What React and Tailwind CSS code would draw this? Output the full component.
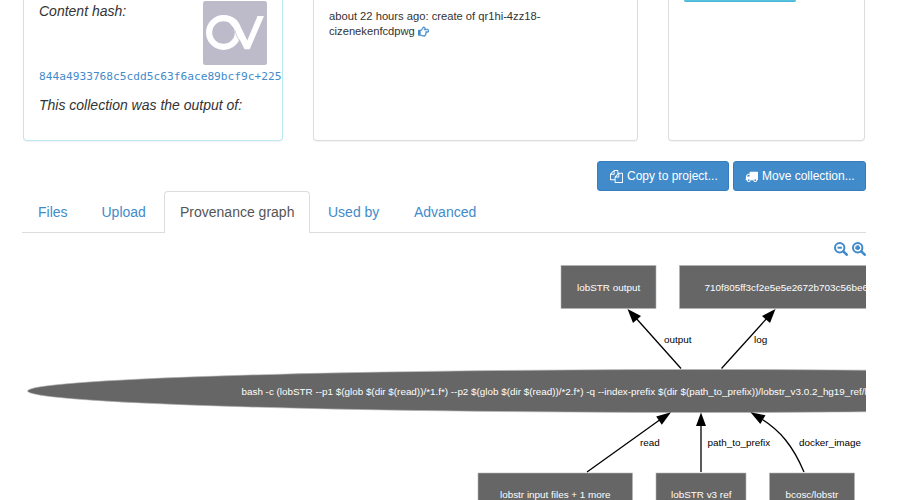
const cardBase = "h-[141px] shrink-0 rounded-b border border-t-0 shadow-[0_1px_1px_rgba(0,0,0,0.05)]";

function FaIcon({ d, className }) {
  return (
    <svg viewBox="0 0 1792 1792" fill="currentColor" className={className}>
      <path d={d} />
    </svg>
  );
}

const COPY =
  "M1696 384q40 0 68 28t28 68v1216q0 40-28 68t-68 28h-960q-40 0-68-28t-28-68v-288h-544q-40 0-68-28t-28-68v-672q0-40 20-88t48-76l408-408q28-28 76-48t88-20h416q40 0 68 28t28 68v328q68-40 128-40h416zm-544 213l-299 299h299v-299zm-640-384l-299 299h299v-299zm196 647l316-316v-416h-384v416q0 40-28 68t-68 28h-416v640h512v-256q0-40 20-88t48-76zm956 804v-1152h-384v416q0 40-28 68t-68 28h-416v640h896z";
const TRUCK =
  "M640 1408q0-52-38-90t-90-38-90 38-38 90 38 90 90 38 90-38 38-90zm-384-512h384v-256h-158q-13 0-22 9l-195 195q-9 9-9 22v30zm1280 512q0-52-38-90t-90-38-90 38-38 90 38 90 90 38 90-38 38-90zm256-1088v1024q0 15-4 26.500t-13.500 18.500-16.500 11.500-23.500 6-22.500 2-25.500 0-22.500-.5q0 106-75 181t-181 75-181-75-75-181h-384q0 106-75 181t-181 75-181-75-75-181h-64q-3 0-22.500.5t-25.500 0-22.500-2-23.500-6-16.500-11.500-13.500-18.500-4-26.500q0-26 19-45t45-19v-320q0-8-.5-35t0-38 2.500-34.500 6.500-37 14-30.500 22.500-30l198-198q19-19 50.500-32t58.500-13h160v-192q0-26 19-45t45-19h1024q26 0 45 19t19 45z";
const HAND =
  "M256 1408q0-26-19-45t-45-19-45 19-19 45 19 45 45 19 45-19 19-45zm1408-640q0-51-39-89.500t-89-38.500h-576q0-20 15-48.500t33-55 33-68 15-84.500q0-67-44.500-97.500t-115.500-30.500q-24 0-90 139-24 44-37 65-40 64-112 145-71 81-101 106-69 57-140 57h-32v640h32q72 0 167 32t193.500 64 179.500 32q189 0 189-167 0-26-5-56 30-16 47.500-52.500t17.500-73.500-18-69q53-50 53-119 0-25-10-55.500t-25-47.500h331q52 0 90-38t38-90zm128-1q0 105-75.500 181t-180.500 76h-169q-4 62-37 119 3 21 3 43 0 101-60 178 1 139-85 219.500t-227 80.500q-133 0-322-69-164-59-223-59h-288q-53 0-90.500-37.500t-37.500-90.500v-640q0-53 37.500-90.500t90.500-37.500h288q10 0 21.500-4.500t23.500-14 22.500-18 24-22.500 20.500-21.500 19-21.500 14-17q65-74 100-129 13-21 33-62t37-72 40.500-63 55-49.500 69.500-17.500q125 0 206.500 67t81.500 189q0 68-22 128h374q104 0 180 76t76 179z";

function ZoomIcon({ plus }) {
  return (
    <svg viewBox="0 0 14 14" className="size-[14px]" fill="none" stroke="currentColor">
      <circle cx="5.7" cy="5.7" r="4.7" strokeWidth="2" />
      <path d="M9.3 9.3 12.7 12.7" strokeWidth="2.6" strokeLinecap="round" />
      {plus ? <path d="M3.300 5.700h4.800M5.700 3.300v4.800" strokeWidth="2.400" /> : <path d="M3.5 5.7h4.4" strokeWidth="2" />}
    </svg>
  );
}

function Logo() {
  return (
    <svg viewBox="0 0 64 64" className="mt-px size-16 shrink-0">
      <rect width="64" height="64" rx="2.500" fill="#bdbaca" />
      <circle cx="20.500" cy="31.500" r="14.400" fill="none" stroke="#fff" strokeWidth="6.200" />
      <path d="M24 14.400C33 16 36 21 38 26.500L44.300 39.500 54.500 15H61L46.700 48.300H41.500L31.500 28 24 19Z" fill="#fff" />
      <path d="M32.200 29.500C33 34 34.500 37 36.800 40" fill="none" stroke="#bdbaca" strokeWidth="0.700" />
    </svg>
  );
}

function Button({ icon, children, className }) {
  return (
    <button className={`flex h-[30px] items-center whitespace-nowrap rounded-[3px] border border-[#357ebd] bg-[#428bca] pl-3 text-[12px] text-white ${className}`}>
      <FaIcon d={icon} className="mr-1 size-[13px]" />
      {children}
    </button>
  );
}

function Tab({ children, className }) {
  return <span className={`h-[41px] pt-[11px] leading-5 text-[#428bca] ${className}`}>{children}</span>;
}

function Graph() {
  return (
    <svg width="844" height="240" viewBox="22 260 844 240" className="block" fontSize="9.9">
      <g fill="#666" stroke="#b5b5b5" strokeWidth="0.6">
        <rect x="561" y="265.500" width="95" height="43" />
        <rect x="679.500" y="265.500" width="260" height="43" />
        <ellipse cx="701" cy="391" rx="673.500" ry="21.500" />
        <rect x="478" y="473" width="154.500" height="43" />
        <rect x="656" y="473" width="90" height="43" />
        <rect x="769.500" y="473" width="85" height="43" />
      </g>
      <g fill="none" stroke="#000" strokeWidth="1.300">
        <path d="M681 368.500 635 317" />
        <path d="M721.500 368.500 768 317" />
        <path d="M587 472 661 419" />
        <path d="M701 472V424" />
        <path d="M804 472C793 446 780 430 760 418" />
      </g>
      <g fill="#000">
        <path d="M627.500 309 641 316 633 323Z" />
        <path d="M775.500 309 770 323 762 316Z" />
        <path d="M671 412.300 661.800 424.800 656.200 416.500Z" />
        <path d="M701 412.500 706 426H696Z" />
        <path d="M750.500 412.300 765.500 415.200 760.300 424Z" />
      </g>
      <g fill="#fff">
        <text x="577" y="291">lobSTR output</text>
        <text x="704.500" y="291">710f805ff3cf2e5e5e2672b703c56be6</text>
        <text x="241.500" y="395" fontSize="9.870">{"bash -c (lobSTR --p1 $(glob $(dir $(read))/*1.f*) --p2 $(glob $(dir $(read))/*2.f*) -q --index-prefix $(dir $(path_to_prefix))/lobstr_v3.0.2_hg19_ref/lobSTR_"}</text>
        <text x="500" y="498">lobstr input files + 1 more</text>
        <text x="671" y="498">lobSTR v3 ref</text>
        <text x="785.500" y="498">bcosc/lobstr</text>
      </g>
      <g fill="#000">
        <text x="664" y="343">output</text>
        <text x="754" y="343">log</text>
        <text x="640" y="446">read</text>
        <text x="707.500" y="446">path_to_prefix</text>
        <text x="799" y="446">docker_image</text>
      </g>
    </svg>
  );
}

export default function App() {
  return (
    <main className="h-[500px] w-[900px] overflow-hidden bg-white pl-[22px] font-['Liberation_Sans',Arial,sans-serif] text-[14px] text-[#333]">
      <div className="flex w-[844px] gap-[30px] pl-px">
        <section className={`${cardBase} w-[260px] border-[#bce8f1] pl-[15px]`}>
          <div className="flex justify-between pr-[15px] italic">
            <span className="leading-[22px]">Content hash:</span>
            <Logo />
          </div>
          <a className="mt-1 block font-['DejaVu_Sans_Mono',monospace] text-[11.2px] leading-4 text-[#428bca]">844a4933768c5cdd5c63f6ace89bcf9c+225</a>
          <p className="mt-[10px] italic leading-5">This collection was the output of:</p>
        </section>
        <section className={`${cardBase} w-[325px] border-[#ddd] pl-[15px] pt-[9px] text-[11.2px] leading-[15px]`}>
          <p>about 22 hours ago: create of qr1hi-4zz18-</p>
          <p className="flex items-center">
            cizenekenfcdpwg
            <FaIcon d={HAND} className="ml-[3px] size-[11.2px] stroke-current stroke-[70] text-[#428bca]" />
          </p>
        </section>
        <section className={`${cardBase} w-[197px] border-[#ddd] pl-[15px]`}>
          <div className="h-0.5 w-28 rounded-b-[3px] border-b border-[#46b8da] bg-[#5bc0de]" />
        </section>
      </div>
      <div className="mt-5 flex w-[844px] justify-end gap-1">
        <Button icon={COPY} className="w-[132px]">Copy to project...</Button>
        <Button icon={TRUCK} className="w-[133px] pl-[11px]">Move collection...</Button>
      </div>
      <nav className="flex h-[42px] w-[844px] border-b border-[#ddd]">
        <Tab className="w-[79px] pl-4">Files</Tab>
        <Tab className="w-[63px] pl-[0.5px]">Upload</Tab>
        <span className="h-[42px] w-[146px] rounded-t border border-b-0 border-[#ddd] bg-white pl-[15px] pt-[10px] leading-5 text-[#555]">Provenance graph</span>
        <Tab className="w-[104px] pl-[18px]">Used by</Tab>
        <Tab>Advanced</Tab>
      </nav>
      <div className="flex h-[27px] w-[844px] justify-end gap-1 pt-[9px] text-[#428bca]">
        <ZoomIcon />
        <ZoomIcon plus />
      </div>
      <Graph />
    </main>
  );
}
